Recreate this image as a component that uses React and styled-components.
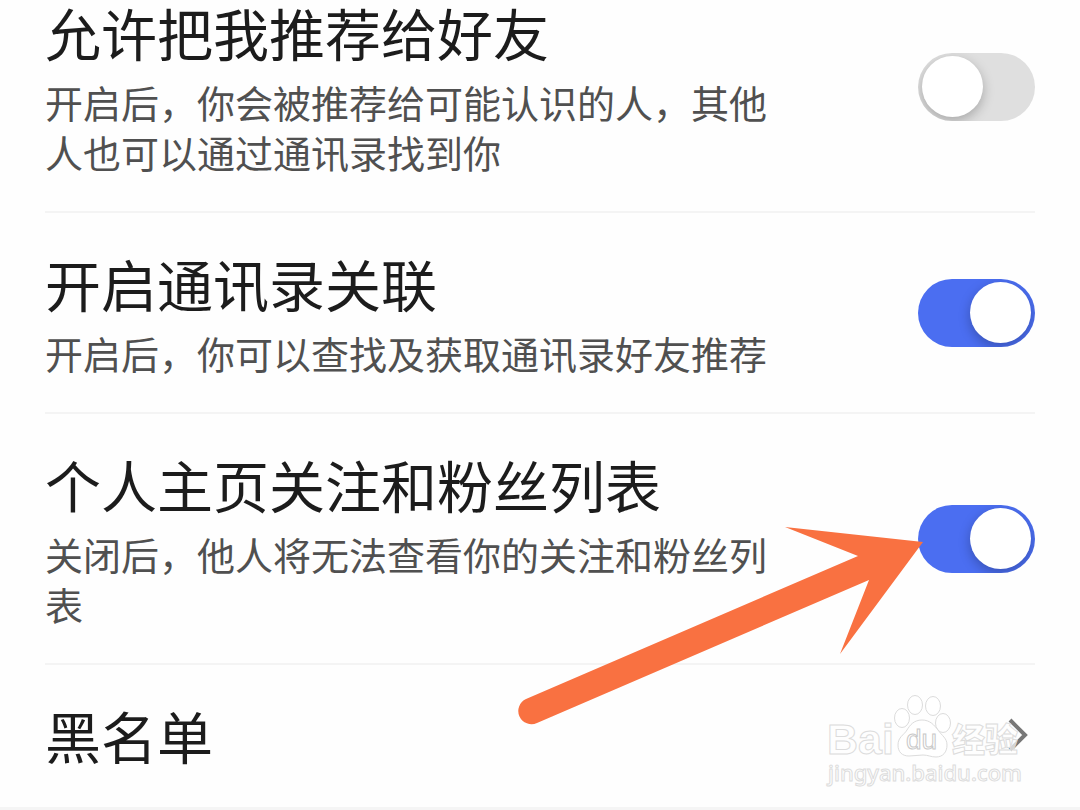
import React, { Fragment, useState } from "react";
import styled, { createGlobalStyle } from "styled-components";

const SETTINGS = [
  {
    id: "recommend",
    name: "允许把我推荐给好友",
    description: "开启后，你会被推荐给可能认识的人，其他人也可以通过通讯录找到你",
    enabled: false,
  },
  {
    id: "contacts",
    name: "开启通讯录关联",
    description: "开启后，你可以查找及获取通讯录好友推荐",
    enabled: true,
  },
  {
    id: "follows",
    name: "个人主页关注和粉丝列表",
    description: "关闭后，他人将无法查看你的关注和粉丝列表",
    enabled: true,
  },
];

const SettingRow = ({ item }) => {
  const [enabled, setEnabled] = useState(item.enabled);

  return (
    <Row>
      <TextColumn>
        <Title as="label" htmlFor={item.id}>{item.name}</Title>
        <Description id={`${item.id}-text`}>{item.description}</Description>
      </TextColumn>
      <Switch
        type="checkbox"
        id={item.id}
        aria-describedby={`${item.id}-text`}
        checked={enabled}
        onChange={() => setEnabled(!enabled)}
      />
    </Row>
  );
};

const Watermark = () => (
  <WatermarkSvg width="208" height="104" viewBox="0 0 208 104" aria-hidden="true">
    <g fill="#fff" fillOpacity="0.7" stroke="#dcdcdc" strokeWidth="1">
      <text x="2" y="71" fontFamily="'Liberation Sans', sans-serif" fontWeight="700" fontSize="43">Bai</text>
      <ellipse cx="77" cy="35" rx="7.5" ry="9.5" />
      <ellipse cx="90" cy="22" rx="7.5" ry="9.5" />
      <ellipse cx="108" cy="23" rx="7.5" ry="9.5" />
      <ellipse cx="118" cy="40" rx="7.5" ry="9.5" />
      <path d="M97 37c-8 0-12 5-15 10-3 5-9 7-9 15 0 7 4 11 11 11 5 0 9-1 14-1s8 2 13 2c7 0 11-5 11-12 0-7-5-9-9-15-4-5-8-10-16-10z" />
      <text x="81" y="66" fontFamily="'Liberation Sans', sans-serif" fontSize="28" stroke="#c8c8c8">du</text>
      <text x="127" y="69" fontFamily="'Noto Sans CJK SC', sans-serif" fontWeight="900" fontSize="33">经验</text>
      <text x="3" y="98" fontFamily="'Noto Sans', sans-serif" fontWeight="500" fontSize="22">jingyan.baidu.com</text>
    </g>
  </WatermarkSvg>
);

const App = () => {
  return (
    <Fragment>
      <GlobalStyle />
      <Page>
        <SettingList>
          {SETTINGS.map((item) => (
            <SettingRow item={item} key={item.id} />
          ))}
          <LinkRow href="#blacklist">
            <TextColumn>
              <Title>黑名单</Title>
            </TextColumn>
            <Chevron width="20" height="34" viewBox="0 0 20 34" aria-hidden="true">
              <path d="M2 2l15 15L2 32" fill="none" stroke="#777" strokeWidth="4" />
            </Chevron>
          </LinkRow>
        </SettingList>
        <Watermark />
        <ArrowSvg width="408" height="202" viewBox="0 0 408 202" aria-hidden="true">
          <path
            d="M407 18L269 3L342 32L10 175A13 13 0 0 0 21 199L353 56L324 130Z"
            fill="#f97141"
          />
        </ArrowSvg>
      </Page>
    </Fragment>
  );
};

export default App;

const GlobalStyle = createGlobalStyle`
  * {
    box-sizing: border-box;
  }

  body {
    margin: 0;
    background: #f5f5f5;
    font-family: "Noto Sans CJK SC", sans-serif;
  }
`;

const Page = styled.main`
  position: relative;
  overflow: hidden;
  background: #fefefe;
`;

// the list is scrolled, so the first row's top padding is out of view
const SettingList = styled.div`
  margin-top: -38px;
  padding: 0 45px;
`;

const Row = styled.div`
  display: flex;
  align-items: center;
  border-bottom: 2px solid #f4f4f4;
`;

const LinkRow = styled.a`
  display: flex;
  align-items: center;
  padding: 0 7px 6px 0;
  color: inherit;
  text-decoration: none;
`;

const TextColumn = styled.div`
  flex: 1;
  padding: 38px 130px 34px 0;
`;

const Title = styled.span`
  display: block;
  color: #1c1c1c;
  font-size: 56px;
  line-height: 64px;
`;

const Description = styled.p`
  margin: 13px 0 0;
  color: #505050;
  font-size: 38px;
  line-height: 50px;
`;

const Switch = styled.input`
  flex: none;
  appearance: none;
  width: 117px;
  height: 68px;
  margin: 0;
  padding: 3px 4px;
  border-radius: 34px;
  overflow: hidden;
  background: #dfdfdf;
  cursor: pointer;

  &::before {
    content: "";
    display: block;
    width: 61px;
    height: 61px;
    border-radius: 50%;
    background: #fff;
    box-shadow: 0 4px 12px rgba(0, 0, 0, 0.25);
  }

  &:checked {
    background: #4b6ef1;
  }

  &:checked::before {
    margin-left: auto;
  }
`;

const Chevron = styled.svg`
  flex: none;
  margin-top: 4px;
`;

const WatermarkSvg = styled.svg`
  position: absolute;
  right: 47px;
  bottom: 20px;
  pointer-events: none;
`;

const ArrowSvg = styled.svg`
  position: absolute;
  top: 524px;
  right: 156px;
  pointer-events: none;
`;
